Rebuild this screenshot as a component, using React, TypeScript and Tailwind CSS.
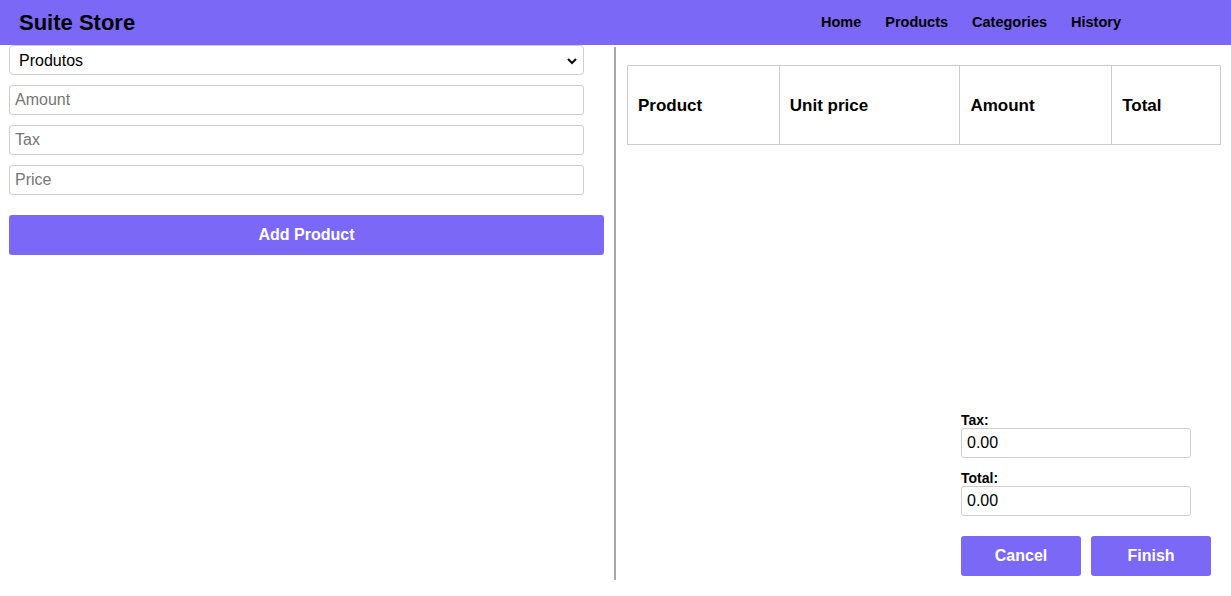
import React from "react";

export default function App() {
  return (
    <div className="w-[1231px] h-[596px] bg-white text-black overflow-hidden font-['Liberation_Sans',Arial,sans-serif]">
      <header className="h-[45px] bg-[#7b68f6] flex items-center justify-between pl-[19px] pr-[110px]">
        <div className="text-[22px] font-bold leading-none">Suite Store</div>
        <nav className="flex gap-[24px] text-[14.5px] font-bold pt-[1px]">
          <span>Home</span>
          <span>Products</span>
          <span>Categories</span>
          <span>History</span>
        </nav>
      </header>
      <div className="flex h-[535px]">
        <div className="w-[614px] pl-[9px] pr-[10px] flex flex-col">
          <div className="w-[575px] h-[30px] border border-[#cfcfcf] rounded-[4px] flex items-center justify-between pl-[9px] pr-[4px] text-[16px] pt-[1px]">
            <span>Produtos</span>
            <svg width="12" height="8" viewBox="0 0 12 8" className="mr-[1px]">
              <path d="M2 2 L6 6 L10 2" stroke="#111" strokeWidth="2.2" fill="none" />
            </svg>
          </div>
          {["Amount", "Tax", "Price"].map((p) => (
            <input
              key={p}
              placeholder={p}
              className="mt-[10px] w-[575px] h-[30px] border border-[#cfcfcf] rounded-[3px] px-[5px] text-[16px] placeholder:text-[#767676] outline-none"
            />
          ))}
          <button className="mt-[20px] w-[595px] h-[40px] bg-[#7b68f6] rounded-[3px] text-white text-[16px] font-bold">
            Add Product
          </button>
        </div>
        <div className="flex-1 mt-[2px] border-l-2 border-l-[#a8a8a8] flex flex-col justify-between pb-[4px]">
          <table className="ml-[11px] mt-[18px] w-[594px] border-collapse text-[17px] font-bold">
            <thead>
              <tr className="h-[79px]">
                <th className="w-[152px] border border-[#cccccc] text-left pl-[10px] pt-[2px]">Product</th>
                <th className="w-[181px] border border-[#cccccc] text-left pl-[10px] pt-[2px]">Unit price</th>
                <th className="w-[152px] border border-[#cccccc] text-left pl-[10px] pt-[2px]">Amount</th>
                <th className="w-[109px] border border-[#cccccc] text-left pl-[10px] pt-[2px]">Total</th>
              </tr>
            </thead>
          </table>
          <div className="ml-[345px] w-[250px] flex flex-col">
            <label className="text-[14px] font-bold leading-[16px]">Tax:</label>
            <input
              readOnly
              value="0.00"
              className="w-[230px] h-[30px] border border-[#cfcfcf] rounded-[3px] px-[5px] text-[16px] outline-none"
            />
            <label className="mt-[12px] text-[14px] font-bold leading-[16px]">Total:</label>
            <input
              readOnly
              value="0.00"
              className="w-[230px] h-[30px] border border-[#cfcfcf] rounded-[3px] px-[5px] text-[16px] outline-none"
            />
            <div className="mt-[20px] flex gap-[10px]">
              <button className="w-[120px] h-[40px] bg-[#7b68f6] rounded-[3px] text-white text-[16px] font-bold">Cancel</button>
              <button className="w-[120px] h-[40px] bg-[#7b68f6] rounded-[3px] text-white text-[16px] font-bold">Finish</button>
            </div>
          </div>
        </div>
      </div>
    </div>
  );
}
